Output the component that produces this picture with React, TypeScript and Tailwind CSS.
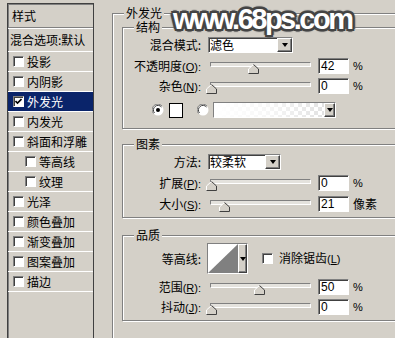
import React from 'react';

const sunken =
  'border border-t-[#808080] border-l-[#808080] border-b-white border-r-white shadow-[inset_1px_1px_0_#404040]';
const raised =
  'border border-t-white border-l-white border-b-[#404040] border-r-[#404040] shadow-[inset_-1px_-1px_0_#808080] bg-[#d4d0c8]';

const layers = [
  { name: '投影' },
  { name: '内阴影' },
  { name: '外发光', active: true },
  { name: '内发光' },
  { name: '斜面和浮雕' },
  { name: '等高线', indent: true },
  { name: '纹理', indent: true },
  { name: '光泽' },
  { name: '颜色叠加' },
  { name: '渐变叠加' },
  { name: '图案叠加' },
  { name: '描边' },
];

function CheckBox({ checked }: { checked?: boolean }) {
  return (
    <div className={`w-[11px] h-[11px] bg-white shrink-0 ${sunken} flex items-center justify-center`}>
      {checked && (
        <svg width="7" height="7" viewBox="0 0 7 7">
          <path d="M0.5 3 L2.5 5 L6.5 1" stroke="#000" strokeWidth="1.6" fill="none" />
        </svg>
      )}
    </div>
  );
}

function Radio({ on }: { on?: boolean }) {
  return (
    <svg width="12" height="12" viewBox="0 0 12 12" className="shrink-0">
      <circle cx="6" cy="6" r="5.5" fill="#fff" />
      <path d="M10 2 A5.5 5.5 0 0 0 1.5 9.5" stroke="#808080" strokeWidth="1" fill="none" />
      <path d="M9.5 3 A4.5 4.5 0 0 0 2.5 9" stroke="#404040" strokeWidth="1" fill="none" />
      {on && <circle cx="6" cy="6" r="2" fill="#000" />}
    </svg>
  );
}

function Arrow() {
  return <div className="w-0 h-0 border-x-[3px] border-x-transparent border-t-[4px] border-t-black" />;
}

function Select({ value, width }: { value: string; width: string }) {
  return (
    <div className={`${width} h-[16px] bg-white ${sunken} flex items-center ml-[7px]`}>
      <span className="flex-1 pl-[1px] leading-none">{value}</span>
      <div className={`w-[15px] h-[14px] ${raised} flex items-center justify-center`}>
        <Arrow />
      </div>
    </div>
  );
}

function Slider({ thumb }: { thumb: number }) {
  return (
    <div className="relative w-[101px] h-[16px] ml-[9px] shrink-0">
      <div className={`absolute left-0 right-0 top-[4px] h-[5px] bg-[#e4e2dd] ${sunken} shadow-none`} />
      <svg width="11" height="10" viewBox="0 0 11 10" className="absolute top-[6px]" style={{ left: thumb - 5 }}>
        <polygon points="0.5,9.5 0.5,5 5.5,0.5 10.5,5 10.5,9.5" fill="#d4d0c8" />
        <polyline points="0.5,9.5 0.5,5 5.5,0.5" stroke="#fff" fill="none" />
        <polyline points="5.5,0.5 10.5,5 10.5,9.5 0.5,9.5" stroke="#404040" fill="none" />
      </svg>
    </div>
  );
}

function NumBox({ value }: { value: string }) {
  return (
    <div className={`w-[31px] h-[16px] bg-white ${sunken} ml-[7px] flex items-center pl-[2px] font-['Liberation_Sans',sans-serif] text-[12px] leading-none`}>
      {value}
    </div>
  );
}

function Label({ children }: { children: React.ReactNode }) {
  return <div className="w-[78px] text-right shrink-0 leading-none whitespace-nowrap">{children}</div>;
}

function SliderRow({ label, thumb, value, unit, mt }: { label: React.ReactNode; thumb: number; value: string; unit: string; mt: string }) {
  return (
    <div className={`flex items-center h-[16px] ${mt}`}>
      <Label>{label}</Label>
      <Slider thumb={thumb} />
      <NumBox value={value} />
      <span className={`ml-[4px] leading-none ${unit === '%' ? "text-[11px] font-['Liberation_Sans',sans-serif]" : ''}`}>{unit}</span>
    </div>
  );
}

function Key({ k }: { k: string }) {
  return (
    <span className="font-['Liberation_Sans',sans-serif] text-[11px]">
      (<span className="underline">{k}</span>):
    </span>
  );
}

function Group({ title, className, children }: { title: string; className: string; children?: React.ReactNode }) {
  return (
    <div className={`relative border border-[#808080] shadow-[inset_1px_1px_0_#fff,1px_1px_0_#fff] ${className}`}>
      <span className="absolute -top-[7px] left-[11px] bg-[#d4d0c8] px-[2px] leading-[12px]">{title}</span>
      {children}
    </div>
  );
}

export default function App() {
  return (
    <div className="relative w-[395px] h-[338px] overflow-hidden bg-[#d4d0c8] text-[12px] text-black font-['Noto_Sans_CJK_SC',sans-serif] flex">
      {/* 左侧样式列表 */}
      <div className="ml-[7px] mt-[3px] w-[87px] h-[345px] border border-[#404040] shadow-[inset_1px_1px_0_#808080] shrink-0 overflow-hidden">
        <div className="h-[24px] flex items-center pl-[4px] leading-none border-b border-[#808080]">样式</div>
        <div className="h-[24px] flex items-center pl-[2px] leading-none whitespace-nowrap border-t border-white border-b">混合选项:默认</div>
        {layers.map((l) => (
          <div
            key={l.name}
            className={`h-[20px] flex items-center border-b border-white whitespace-nowrap leading-none ${l.indent ? 'pl-[17px]' : 'pl-[5px]'} ${l.active ? 'bg-[#0a246a] text-white' : ''}`}
          >
            <CheckBox checked={l.active} />
            <span className="ml-[3px]">{l.name}</span>
          </div>
        ))}
      </div>

      {/* 外发光 */}
      <Group title="外发光" className="ml-[18px] mt-[13px] w-[300px] h-[340px] shrink-0 pt-[13px] pl-[9px]">
        <Group title="结构" className="h-[102px] w-[300px]">
          <div className="flex items-center h-[16px] mt-[9px]">
            <Label>混合模式:</Label>
            <Select value="滤色" width="w-[85px]" />
          </div>
          <SliderRow label={<>不透明度<Key k="O" /></>} thumb={43} value="42" unit="%" mt="mt-[5px]" />
          <SliderRow label={<>杂色<Key k="N" /></>} thumb={1} value="0" unit="%" mt="mt-[4px]" />
          <div className="flex items-center h-[16px] mt-[8px] pl-[29px]">
            <Radio on />
            <div className="ml-[5px] w-[14px] h-[15px] bg-white border border-black" />
            <div className="ml-[14px]"><Radio /></div>
            <div className={`ml-[4px] w-[123px] h-[16px] ${sunken} flex`}>
              <div className="flex-1 bg-[image:repeating-conic-gradient(#d6d6d6_0%_25%,#ffffff_0%_50%)] bg-[length:8px_8px]">
                <div className="w-full h-full bg-linear-to-r from-white via-white/80 to-white/30" />
              </div>
              <div className={`w-[11px] h-full ${raised} flex items-center justify-center`}>
                <Arrow />
              </div>
            </div>
          </div>
        </Group>

        <Group title="图素" className="mt-[15px] h-[74px] w-[300px]">
          <div className="flex items-center h-[16px] mt-[9px]">
            <Label>方法:</Label>
            <Select value="较柔软" width="w-[73px]" />
          </div>
          <SliderRow label={<>扩展<Key k="P" /></>} thumb={1} value="0" unit="%" mt="mt-[5px]" />
          <SliderRow label={<>大小<Key k="S" /></>} thumb={14} value="21" unit="像素" mt="mt-[5px]" />
        </Group>

        <Group title="品质" className="mt-[17px] h-[86px] w-[300px]">
          <div className="flex items-center h-[31px] mt-[7px]">
            <Label>等高线:</Label>
            <div className={`ml-[6px] w-[41px] h-[31px] ${sunken} flex bg-white`}>
              <svg width="30" height="29" viewBox="0 0 30 29" className="shrink-0">
                <rect width="30" height="29" fill="#fff" />
                <polygon points="0,29 30,0 30,29" fill="#808080" />
              </svg>
              <div className={`flex-1 h-full ${raised} flex items-center justify-center`}>
                <Arrow />
              </div>
            </div>
            <div className="ml-[14px]"><CheckBox /></div>
            <span className="ml-[6px] leading-none whitespace-nowrap">
              消除锯齿<span className="font-['Liberation_Sans',sans-serif] text-[11px]">(<span className="underline">L</span>)</span>
            </span>
          </div>
          <SliderRow label={<>范围<Key k="R" /></>} thumb={49} value="50" unit="%" mt="mt-[5px]" />
          <SliderRow label={<>抖动<Key k="J" /></>} thumb={1} value="0" unit="%" mt="mt-[4px]" />
        </Group>
      </Group>

      {/* 水印 */}
      <div className="absolute left-[173px] top-[5px] text-[29px] leading-[29px] font-bold tracking-[-2.5px] text-white font-['Liberation_Sans',sans-serif] [text-shadow:2px_0_0_#444,-2px_0_0_#444,0_2px_0_#444,0_-2px_0_#444,2px_2px_0_#444,-2px_-2px_0_#444,2px_-2px_0_#444,-2px_2px_0_#444,3px_0_1px_#666,-3px_0_1px_#666,0_3px_1px_#666,0_-3px_1px_#666]">
        www.68ps.com
      </div>
    </div>
  );
}
